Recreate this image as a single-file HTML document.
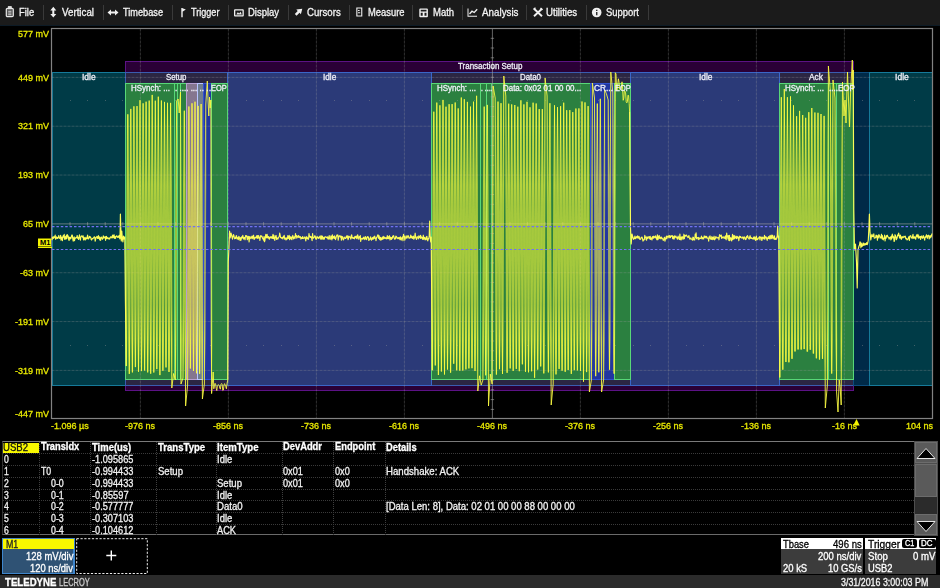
<!DOCTYPE html>
<html><head><meta charset="utf-8"><title>USB2 decode</title>
<style>
html,body{margin:0;padding:0;background:#000;}
body{width:940px;height:588px;position:relative;overflow:hidden;font-family:"Liberation Sans",sans-serif;font-size:11px;color:#fff;}
.abs{position:absolute;white-space:nowrap;}
.t{position:absolute;white-space:nowrap;transform-origin:0 50%;-webkit-text-stroke:0.3px currentColor;}
#menu{position:absolute;left:0;top:0;width:940px;height:25px;background:#1b1b1b;border-bottom:1px solid #0d1b26;}
.sep{position:absolute;top:5px;width:1px;height:15px;background:#3a3a3a;}
#tbl{position:absolute;left:2px;top:441px;width:912px;height:94px;border-top:1px solid #7a7a7a;border-bottom:1px solid #6a6a6a;border-left:1px solid #333;box-sizing:border-box;}
.tr{position:absolute;left:0;width:911px;height:0;border-bottom:1px dotted #3a3a3a;}
.vc{position:absolute;top:0;width:0;height:93px;border-left:1px dotted #3e3e3e;}
</style></head><body>

<div id="menu">
<div class="sep" style="left:43.0px"></div>
<div class="sep" style="left:103.0px"></div>
<div class="sep" style="left:172.0px"></div>
<div class="sep" style="left:228.0px"></div>
<div class="sep" style="left:287.8px"></div>
<div class="sep" style="left:349.0px"></div>
<div class="sep" style="left:412.0px"></div>
<div class="sep" style="left:462.0px"></div>
<div class="sep" style="left:526.3px"></div>
<div class="sep" style="left:586.2px"></div>
<div class="sep" style="left:648.0px"></div>
<svg class="abs" style="left:0;top:0" width="660" height="26" viewBox="0 0 660 26">
<g fill="none" stroke="#e8e8e8" stroke-width="1.2">
<rect x="6.3" y="8.3" width="7" height="8.4" rx="1.2" fill="#555"/><rect x="8.3" y="6.6" width="3" height="2.2" fill="#ddd" stroke-width="0.8"/>
<path d="M8.2 11.3h3.200M8.200 13h3.200M8.200 14.700h3.200" stroke-width="0.8"/>
</g>
<g fill="#f0f0f0">
<path d="M53.300 6.800l3 3.600h-2v3.600h2l-3 3.600l-3-3.600h2v-3.600h-2z"/>
<path d="M107.500 12.500l3.500-3v2h4v-2l3.500 3l-3.500 3v-2h-4v2z"/>
<path d="M181.300 8h1.400v9.300h-1.400zM182.500 8.200l3.300 1.400l-3.300 2.200z"/>
<path d="M235 9.300h7.800a1 1 0 0 1 1 1v5.200a1 1 0 0 1 -1 1h-7.800a1 1 0 0 1 -1 -1v-5.200a1 1 0 0 1 1 -1zM235.300 10.600v4.600h7.200v-4.600z" fill-rule="evenodd"/>
<path d="M236.300 14.600l1.500-2.300l1.400 1.300l1.400-1.800l1.200 2.800z"/>
<path d="M302.300 8.800l-1.400 5.400l-1.400-1.400l-2.900 3l-1.800-1.800l2.900-3l-1.400-1.400z"/>
<path d="M356.300 7.500h6v9h-6zM357.400 8.600v6.800h3.800v-6.800z" fill-rule="evenodd"/><path d="M358 10h1.600v1h-1.600zM358 12.300h2.200v1h-2.200z"/>
<path d="M420.300 8.600h6.600a1 1 0 0 1 1 1v6.600a1 1 0 0 1 -1 1h-6.600a1 1 0 0 1 -1 -1v-6.600a1 1 0 0 1 1 -1zM420.700 12.800v3h2v-3zM424.500 12.800v3h2v-3zM420.700 9.800v1.600h5.800v-1.600z" fill-rule="evenodd"/>
<path d="M467.500 8.500h1v7.300h8.500v1h-9.500z"/><path d="M469.500 14l2.500-2.800l2.200 1.300l3-3.200" fill="none" stroke="#f0f0f0" stroke-width="1.300"/>
<circle cx="596.700" cy="12.500" r="4.800"/>
</g>
<path d="M534 8.700l8 7.600M542 8.700l-8 7.600" fill="none" stroke="#f0f0f0" stroke-width="1.900"/>
<path d="M533.500 9.300l2-1.500M540.500 8l2 1.800" fill="none" stroke="#f0f0f0" stroke-width="1.400"/>
<path d="M596.100 9.800h1.300v1.300h-1.300zM596.100 12h1.300v3.200h-1.300z" fill="#1b1b1b"/>
</svg>
<div class="t" style="left:19.1px;top:6.3px;font-size:10.5px;line-height:12.5px;color:#f4f4f4;transform:scaleX(0.892);">File</div>
<div class="t" style="left:62.2px;top:6.3px;font-size:10.5px;line-height:12.5px;color:#f4f4f4;transform:scaleX(0.929);">Vertical</div>
<div class="t" style="left:122.5px;top:6.3px;font-size:10.5px;line-height:12.5px;color:#f4f4f4;transform:scaleX(0.875);">Timebase</div>
<div class="t" style="left:191.1px;top:6.3px;font-size:10.5px;line-height:12.5px;color:#f4f4f4;transform:scaleX(0.864);">Trigger</div>
<div class="t" style="left:247.6px;top:6.3px;font-size:10.5px;line-height:12.5px;color:#f4f4f4;transform:scaleX(0.903);">Display</div>
<div class="t" style="left:306.8px;top:6.3px;font-size:10.5px;line-height:12.5px;color:#f4f4f4;transform:scaleX(0.917);">Cursors</div>
<div class="t" style="left:367.9px;top:6.3px;font-size:10.5px;line-height:12.5px;color:#f4f4f4;transform:scaleX(0.893);">Measure</div>
<div class="t" style="left:432.5px;top:6.3px;font-size:10.5px;line-height:12.5px;color:#f4f4f4;transform:scaleX(0.904);">Math</div>
<div class="t" style="left:481.7px;top:6.3px;font-size:10.5px;line-height:12.5px;color:#f4f4f4;transform:scaleX(0.934);">Analysis</div>
<div class="t" style="left:546.3px;top:6.3px;font-size:10.5px;line-height:12.5px;color:#f4f4f4;transform:scaleX(0.922);">Utilities</div>
<div class="t" style="left:606.0px;top:6.3px;font-size:10.5px;line-height:12.5px;color:#f4f4f4;transform:scaleX(0.897);">Support</div>
</div>
<div class="t" style="left:17.5px;top:28.8px;font-size:9.2px;line-height:11.2px;color:#e8e800;transform:scaleX(0.980);">577 mV</div>
<div class="t" style="left:17.5px;top:72.9px;font-size:9.2px;line-height:11.2px;color:#e8e800;transform:scaleX(0.980);">449 mV</div>
<div class="t" style="left:17.5px;top:121.4px;font-size:9.2px;line-height:11.2px;color:#e8e800;transform:scaleX(0.980);">321 mV</div>
<div class="t" style="left:17.5px;top:170.4px;font-size:9.2px;line-height:11.2px;color:#e8e800;transform:scaleX(0.980);">193 mV</div>
<div class="t" style="left:22.5px;top:219.4px;font-size:9.2px;line-height:11.2px;color:#e8e800;transform:scaleX(0.980);">65 mV</div>
<div class="t" style="left:19.5px;top:267.9px;font-size:9.2px;line-height:11.2px;color:#e8e800;transform:scaleX(0.980);">-63 mV</div>
<div class="t" style="left:14.5px;top:316.7px;font-size:9.2px;line-height:11.2px;color:#e8e800;transform:scaleX(0.980);">-191 mV</div>
<div class="t" style="left:14.5px;top:365.7px;font-size:9.2px;line-height:11.2px;color:#e8e800;transform:scaleX(0.980);">-319 mV</div>
<div class="t" style="left:14.5px;top:408.7px;font-size:9.2px;line-height:11.2px;color:#e8e800;transform:scaleX(0.980);">-447 mV</div>
<div class="t" style="left:51.2px;top:421.2px;font-size:9.2px;line-height:11.2px;color:#e8e800;transform:scaleX(0.980);">-1.096 µs</div>
<div class="t" style="left:125.0px;top:421.2px;font-size:9.2px;line-height:11.2px;color:#e8e800;transform:scaleX(0.980);">-976 ns</div>
<div class="t" style="left:213.0px;top:421.2px;font-size:9.2px;line-height:11.2px;color:#e8e800;transform:scaleX(0.980);">-856 ns</div>
<div class="t" style="left:301.0px;top:421.2px;font-size:9.2px;line-height:11.2px;color:#e8e800;transform:scaleX(0.980);">-736 ns</div>
<div class="t" style="left:389.0px;top:421.2px;font-size:9.2px;line-height:11.2px;color:#e8e800;transform:scaleX(0.980);">-616 ns</div>
<div class="t" style="left:477.0px;top:421.2px;font-size:9.2px;line-height:11.2px;color:#e8e800;transform:scaleX(0.980);">-496 ns</div>
<div class="t" style="left:565.0px;top:421.2px;font-size:9.2px;line-height:11.2px;color:#e8e800;transform:scaleX(0.980);">-376 ns</div>
<div class="t" style="left:653.0px;top:421.2px;font-size:9.2px;line-height:11.2px;color:#e8e800;transform:scaleX(0.980);">-256 ns</div>
<div class="t" style="left:741.0px;top:421.2px;font-size:9.2px;line-height:11.2px;color:#e8e800;transform:scaleX(0.980);">-136 ns</div>
<div class="t" style="left:831.5px;top:421.2px;font-size:9.2px;line-height:11.2px;color:#e8e800;transform:scaleX(0.980);">-16 ns</div>
<div class="t" style="left:905.9px;top:421.2px;font-size:9.2px;line-height:11.2px;color:#e8e800;transform:scaleX(0.980);">104 ns</div>
<svg class="abs" style="left:0;top:0" width="940" height="588" viewBox="0 0 940 588">
<g shape-rendering="crispEdges">
<rect x="125.5" y="61.0" width="727.8" height="329.5" fill="#2a0036" stroke="#5c1285" stroke-width="1"/><rect x="52.0" y="72.5" width="73.5" height="313.0" fill="#003b47" stroke="#167a9a" stroke-width="1"/><rect x="125.5" y="72.5" width="102.3" height="313.0" fill="#2b2643" stroke="#3a5cb0" stroke-width="1"/><rect x="431.5" y="72.5" width="198.5" height="313.0" fill="#2b2643" stroke="#3a5cb0" stroke-width="1"/><rect x="779.0" y="72.5" width="74.2" height="313.0" fill="#2b2643" stroke="#3a5cb0" stroke-width="1"/><rect x="227.8" y="72.5" width="203.7" height="313.0" fill="#2b3a78" stroke="#3a66c8" stroke-width="1"/><rect x="630.0" y="72.5" width="149.0" height="313.0" fill="#2b3a78" stroke="#3a66c8" stroke-width="1"/><rect x="853.2" y="72.5" width="16.3" height="313.0" fill="#002a48" stroke="#0d4c7c" stroke-width="1"/><rect x="869.5" y="72.5" width="62.5" height="313.0" fill="#003b47" stroke="#167a9a" stroke-width="1"/><rect x="125.5" y="83.0" width="48.8" height="296.5" fill="#2b8040" stroke="#58d878" stroke-width="1"/><rect x="174.3" y="83.0" width="3.1" height="296.5" fill="#2b8040" stroke="#58d878" stroke-width="1"/><rect x="177.4" y="83.0" width="3.2" height="296.5" fill="#2b8040" stroke="#58d878" stroke-width="1"/><rect x="180.6" y="83.0" width="5.9" height="296.5" fill="#2b8040" stroke="#58d878" stroke-width="1"/><rect x="186.5" y="83.0" width="10.5" height="296.5" fill="#85768f" stroke="#b79fd0" stroke-width="1"/><rect x="197.0" y="83.0" width="6.0" height="296.5" fill="#6f7d90" stroke="#b8c4ff" stroke-width="1"/><rect x="203.0" y="83.0" width="8.3" height="296.5" fill="#2236a0" stroke="#3050d0" stroke-width="1"/><rect x="211.3" y="83.0" width="16.5" height="296.5" fill="#2b8040" stroke="#58d878" stroke-width="1"/><rect x="431.5" y="83.0" width="48.5" height="296.5" fill="#2b8040" stroke="#58d878" stroke-width="1"/><rect x="480.0" y="83.0" width="6.0" height="296.5" fill="#2b8040" stroke="#58d878" stroke-width="1"/><rect x="486.0" y="83.0" width="5.5" height="296.5" fill="#2b8040" stroke="#58d878" stroke-width="1"/><rect x="491.5" y="83.0" width="99.1" height="296.5" fill="#2b8040" stroke="#58d878" stroke-width="1"/><rect x="590.6" y="83.0" width="23.6" height="296.5" fill="#2236a0" stroke="#3050d0" stroke-width="1"/><rect x="614.2" y="83.0" width="15.8" height="296.5" fill="#2b8040" stroke="#58d878" stroke-width="1"/><rect x="779.0" y="83.0" width="49.0" height="296.5" fill="#2b8040" stroke="#58d878" stroke-width="1"/><rect x="828.0" y="83.0" width="8.0" height="296.5" fill="#2b8040" stroke="#58d878" stroke-width="1"/><rect x="836.0" y="83.0" width="17.2" height="296.5" fill="#2b8040" stroke="#58d878" stroke-width="1"/>
</g>
<g stroke="#9a9a9a" stroke-opacity="0.3" stroke-width="1" stroke-dasharray="3 1"><line x1="51.5" y1="77.40" x2="932.5" y2="77.40"/><line x1="51.5" y1="126.23" x2="932.5" y2="126.23"/><line x1="51.5" y1="175.06" x2="932.5" y2="175.06"/><line x1="51.5" y1="272.72" x2="932.5" y2="272.72"/><line x1="51.5" y1="321.55" x2="932.5" y2="321.55"/><line x1="51.5" y1="370.38" x2="932.5" y2="370.38"/><line x1="140.4" y1="28.5" x2="140.4" y2="418.5"/><line x1="228.4" y1="28.5" x2="228.4" y2="418.5"/><line x1="316.4" y1="28.5" x2="316.4" y2="418.5"/><line x1="404.4" y1="28.5" x2="404.4" y2="418.5"/><line x1="580.4" y1="28.5" x2="580.4" y2="418.5"/><line x1="668.4" y1="28.5" x2="668.4" y2="418.5"/><line x1="756.4" y1="28.5" x2="756.4" y2="418.5"/><line x1="844.4" y1="28.5" x2="844.4" y2="418.5"/></g>
<g stroke="#a0a0a0" stroke-opacity="0.62" stroke-width="1"><line x1="51.5" y1="223.89" x2="932.5" y2="223.89"/><line x1="492.4" y1="28.5" x2="492.4" y2="418.5"/><line x1="70.0" y1="222.200" x2="70.0" y2="225.600"/><line x1="87.6" y1="222.200" x2="87.6" y2="225.600"/><line x1="105.2" y1="222.200" x2="105.2" y2="225.600"/><line x1="122.8" y1="222.200" x2="122.8" y2="225.600"/><line x1="140.4" y1="222.200" x2="140.4" y2="225.600"/><line x1="158.0" y1="222.200" x2="158.0" y2="225.600"/><line x1="175.6" y1="222.200" x2="175.6" y2="225.600"/><line x1="193.2" y1="222.200" x2="193.2" y2="225.600"/><line x1="210.8" y1="222.200" x2="210.8" y2="225.600"/><line x1="228.4" y1="222.200" x2="228.4" y2="225.600"/><line x1="246.0" y1="222.200" x2="246.0" y2="225.600"/><line x1="263.6" y1="222.200" x2="263.6" y2="225.600"/><line x1="281.2" y1="222.200" x2="281.2" y2="225.600"/><line x1="298.8" y1="222.200" x2="298.8" y2="225.600"/><line x1="316.4" y1="222.200" x2="316.4" y2="225.600"/><line x1="334.0" y1="222.200" x2="334.0" y2="225.600"/><line x1="351.6" y1="222.200" x2="351.6" y2="225.600"/><line x1="369.2" y1="222.200" x2="369.2" y2="225.600"/><line x1="386.8" y1="222.200" x2="386.8" y2="225.600"/><line x1="404.4" y1="222.200" x2="404.4" y2="225.600"/><line x1="422.0" y1="222.200" x2="422.0" y2="225.600"/><line x1="439.6" y1="222.200" x2="439.6" y2="225.600"/><line x1="457.2" y1="222.200" x2="457.2" y2="225.600"/><line x1="474.8" y1="222.200" x2="474.8" y2="225.600"/><line x1="492.4" y1="222.200" x2="492.4" y2="225.600"/><line x1="510.0" y1="222.200" x2="510.0" y2="225.600"/><line x1="527.6" y1="222.200" x2="527.6" y2="225.600"/><line x1="545.2" y1="222.200" x2="545.2" y2="225.600"/><line x1="562.8" y1="222.200" x2="562.8" y2="225.600"/><line x1="580.4" y1="222.200" x2="580.4" y2="225.600"/><line x1="598.0" y1="222.200" x2="598.0" y2="225.600"/><line x1="615.6" y1="222.200" x2="615.6" y2="225.600"/><line x1="633.2" y1="222.200" x2="633.2" y2="225.600"/><line x1="650.8" y1="222.200" x2="650.8" y2="225.600"/><line x1="668.4" y1="222.200" x2="668.4" y2="225.600"/><line x1="686.0" y1="222.200" x2="686.0" y2="225.600"/><line x1="703.6" y1="222.200" x2="703.6" y2="225.600"/><line x1="721.2" y1="222.200" x2="721.2" y2="225.600"/><line x1="738.8" y1="222.200" x2="738.8" y2="225.600"/><line x1="756.4" y1="222.200" x2="756.4" y2="225.600"/><line x1="774.0" y1="222.200" x2="774.0" y2="225.600"/><line x1="791.6" y1="222.200" x2="791.6" y2="225.600"/><line x1="809.2" y1="222.200" x2="809.2" y2="225.600"/><line x1="826.8" y1="222.200" x2="826.8" y2="225.600"/><line x1="844.4" y1="222.200" x2="844.4" y2="225.600"/><line x1="862.0" y1="222.200" x2="862.0" y2="225.600"/><line x1="879.6" y1="222.200" x2="879.6" y2="225.600"/><line x1="897.2" y1="222.200" x2="897.2" y2="225.600"/><line x1="914.8" y1="222.200" x2="914.8" y2="225.600"/><line x1="490.700" y1="38.3" x2="494.100" y2="38.3"/><line x1="490.700" y1="48.0" x2="494.100" y2="48.0"/><line x1="490.700" y1="57.8" x2="494.100" y2="57.8"/><line x1="490.700" y1="67.6" x2="494.100" y2="67.6"/><line x1="490.700" y1="77.3" x2="494.100" y2="77.3"/><line x1="490.700" y1="87.1" x2="494.100" y2="87.1"/><line x1="490.700" y1="96.9" x2="494.100" y2="96.9"/><line x1="490.700" y1="106.6" x2="494.100" y2="106.6"/><line x1="490.700" y1="116.4" x2="494.100" y2="116.4"/><line x1="490.700" y1="126.2" x2="494.100" y2="126.2"/><line x1="490.700" y1="135.9" x2="494.100" y2="135.9"/><line x1="490.700" y1="145.7" x2="494.100" y2="145.7"/><line x1="490.700" y1="155.5" x2="494.100" y2="155.5"/><line x1="490.700" y1="165.2" x2="494.100" y2="165.2"/><line x1="490.700" y1="175.0" x2="494.100" y2="175.0"/><line x1="490.700" y1="184.8" x2="494.100" y2="184.8"/><line x1="490.700" y1="194.5" x2="494.100" y2="194.5"/><line x1="490.700" y1="204.3" x2="494.100" y2="204.3"/><line x1="490.700" y1="214.1" x2="494.100" y2="214.1"/><line x1="490.700" y1="223.8" x2="494.100" y2="223.8"/><line x1="490.700" y1="233.6" x2="494.100" y2="233.6"/><line x1="490.700" y1="243.4" x2="494.100" y2="243.4"/><line x1="490.700" y1="253.1" x2="494.100" y2="253.1"/><line x1="490.700" y1="262.9" x2="494.100" y2="262.9"/><line x1="490.700" y1="272.6" x2="494.100" y2="272.6"/><line x1="490.700" y1="282.4" x2="494.100" y2="282.4"/><line x1="490.700" y1="292.2" x2="494.100" y2="292.2"/><line x1="490.700" y1="301.9" x2="494.100" y2="301.9"/><line x1="490.700" y1="311.7" x2="494.100" y2="311.7"/><line x1="490.700" y1="321.5" x2="494.100" y2="321.5"/><line x1="490.700" y1="331.2" x2="494.100" y2="331.2"/><line x1="490.700" y1="341.0" x2="494.100" y2="341.0"/><line x1="490.700" y1="350.8" x2="494.100" y2="350.8"/><line x1="490.700" y1="360.5" x2="494.100" y2="360.5"/><line x1="490.700" y1="370.3" x2="494.100" y2="370.3"/><line x1="490.700" y1="380.1" x2="494.100" y2="380.1"/><line x1="490.700" y1="389.8" x2="494.100" y2="389.8"/><line x1="490.700" y1="399.6" x2="494.100" y2="399.6"/><line x1="490.700" y1="409.4" x2="494.100" y2="409.4"/></g>
<g fill="#9a9a9a" fill-opacity="0.4" shape-rendering="crispEdges"><rect x="70.0" y="100.0" width="1" height="1"/><rect x="70.0" y="345.0" width="1" height="1"/><rect x="87.0" y="100.0" width="1" height="1"/><rect x="87.0" y="345.0" width="1" height="1"/><rect x="105.0" y="100.0" width="1" height="1"/><rect x="105.0" y="345.0" width="1" height="1"/><rect x="122.0" y="100.0" width="1" height="1"/><rect x="122.0" y="345.0" width="1" height="1"/><rect x="158.0" y="100.0" width="1" height="1"/><rect x="158.0" y="345.0" width="1" height="1"/><rect x="175.0" y="100.0" width="1" height="1"/><rect x="175.0" y="345.0" width="1" height="1"/><rect x="193.0" y="100.0" width="1" height="1"/><rect x="193.0" y="345.0" width="1" height="1"/><rect x="210.0" y="100.0" width="1" height="1"/><rect x="210.0" y="345.0" width="1" height="1"/><rect x="246.0" y="100.0" width="1" height="1"/><rect x="246.0" y="345.0" width="1" height="1"/><rect x="263.0" y="100.0" width="1" height="1"/><rect x="263.0" y="345.0" width="1" height="1"/><rect x="281.0" y="100.0" width="1" height="1"/><rect x="281.0" y="345.0" width="1" height="1"/><rect x="298.0" y="100.0" width="1" height="1"/><rect x="298.0" y="345.0" width="1" height="1"/><rect x="334.0" y="100.0" width="1" height="1"/><rect x="334.0" y="345.0" width="1" height="1"/><rect x="351.0" y="100.0" width="1" height="1"/><rect x="351.0" y="345.0" width="1" height="1"/><rect x="369.0" y="100.0" width="1" height="1"/><rect x="369.0" y="345.0" width="1" height="1"/><rect x="386.0" y="100.0" width="1" height="1"/><rect x="386.0" y="345.0" width="1" height="1"/><rect x="422.0" y="100.0" width="1" height="1"/><rect x="422.0" y="345.0" width="1" height="1"/><rect x="439.0" y="100.0" width="1" height="1"/><rect x="439.0" y="345.0" width="1" height="1"/><rect x="457.0" y="100.0" width="1" height="1"/><rect x="457.0" y="345.0" width="1" height="1"/><rect x="474.0" y="100.0" width="1" height="1"/><rect x="474.0" y="345.0" width="1" height="1"/><rect x="510.0" y="100.0" width="1" height="1"/><rect x="510.0" y="345.0" width="1" height="1"/><rect x="527.0" y="100.0" width="1" height="1"/><rect x="527.0" y="345.0" width="1" height="1"/><rect x="545.0" y="100.0" width="1" height="1"/><rect x="545.0" y="345.0" width="1" height="1"/><rect x="562.0" y="100.0" width="1" height="1"/><rect x="562.0" y="345.0" width="1" height="1"/><rect x="598.0" y="100.0" width="1" height="1"/><rect x="598.0" y="345.0" width="1" height="1"/><rect x="615.0" y="100.0" width="1" height="1"/><rect x="615.0" y="345.0" width="1" height="1"/><rect x="633.0" y="100.0" width="1" height="1"/><rect x="633.0" y="345.0" width="1" height="1"/><rect x="650.0" y="100.0" width="1" height="1"/><rect x="650.0" y="345.0" width="1" height="1"/><rect x="686.0" y="100.0" width="1" height="1"/><rect x="686.0" y="345.0" width="1" height="1"/><rect x="703.0" y="100.0" width="1" height="1"/><rect x="703.0" y="345.0" width="1" height="1"/><rect x="721.0" y="100.0" width="1" height="1"/><rect x="721.0" y="345.0" width="1" height="1"/><rect x="738.0" y="100.0" width="1" height="1"/><rect x="738.0" y="345.0" width="1" height="1"/><rect x="774.0" y="100.0" width="1" height="1"/><rect x="774.0" y="345.0" width="1" height="1"/><rect x="791.0" y="100.0" width="1" height="1"/><rect x="791.0" y="345.0" width="1" height="1"/><rect x="809.0" y="100.0" width="1" height="1"/><rect x="809.0" y="345.0" width="1" height="1"/><rect x="826.0" y="100.0" width="1" height="1"/><rect x="826.0" y="345.0" width="1" height="1"/><rect x="862.0" y="100.0" width="1" height="1"/><rect x="862.0" y="345.0" width="1" height="1"/><rect x="879.0" y="100.0" width="1" height="1"/><rect x="879.0" y="345.0" width="1" height="1"/><rect x="897.0" y="100.0" width="1" height="1"/><rect x="897.0" y="345.0" width="1" height="1"/><rect x="914.0" y="100.0" width="1" height="1"/><rect x="914.0" y="345.0" width="1" height="1"/></g>
<rect x="51.5" y="28.5" width="881.0" height="390.0" fill="none" stroke="#828282" stroke-width="1.2"/>
<path d="M52.0 240.2 L52.5 237.0 L52.9 237.7 L53.4 238.3 L53.8 236.5 L54.3 237.7 L54.7 237.7 L55.2 235.1 L55.6 239.2 L56.1 238.6 L56.5 236.8 L57.0 237.4 L57.4 238.5 L57.9 237.3 L58.3 237.3 L58.8 235.5 L59.2 238.5 L59.7 237.9 L60.1 238.1 L60.6 235.4 L61.0 240.2 L61.5 237.9 L61.9 237.1 L62.4 240.7 L62.8 237.6 L63.3 235.5 L63.7 237.1 L64.2 234.3 L64.6 239.3 L65.1 237.1 L65.5 236.6 L66.0 239.3 L66.4 235.2 L66.9 238.5 L67.3 234.6 L67.8 236.7 L68.2 235.9 L68.7 239.9 L69.1 240.3 L69.6 237.2 L70.0 239.0 L70.5 237.4 L70.9 238.6 L71.4 236.6 L71.8 235.1 L72.3 235.0 L72.7 238.3 L73.2 241.1 L73.6 238.1 L74.1 236.9 L74.5 240.6 L75.0 238.1 L75.4 237.9 L75.9 238.1 L76.3 237.5 L76.8 237.2 L77.2 235.5 L77.7 238.5 L78.1 237.6 L78.6 239.5 L79.0 237.1 L79.5 234.8 L79.9 237.6 L80.4 240.2 L80.8 237.1 L81.3 236.4 L81.7 235.9 L82.2 236.1 L82.6 237.2 L83.1 235.9 L83.5 239.9 L84.0 237.3 L84.4 237.9 L84.9 239.9 L85.3 240.0 L85.8 237.4 L86.2 238.2 L86.7 238.8 L87.1 237.4 L87.6 235.0 L88.0 238.7 L88.5 239.0 L88.9 238.3 L89.4 236.3 L89.8 237.4 L90.3 236.8 L90.7 237.3 L91.2 239.6 L91.6 240.0 L92.1 238.7 L92.5 238.5 L93.0 238.7 L93.4 237.7 L93.9 237.6 L94.3 236.7 L94.8 237.6 L95.2 241.1 L95.7 239.0 L96.1 237.2 L96.6 237.0 L97.0 236.4 L97.5 238.3 L97.9 238.3 L98.4 235.5 L98.8 238.4 L99.3 236.8 L99.7 239.8 L100.2 237.9 L100.6 240.3 L101.1 237.0 L101.5 237.3 L102.0 238.1 L102.4 239.3 L102.9 238.5 L103.3 235.8 L103.8 238.0 L104.2 237.7 L104.7 237.1 L105.1 236.7 L105.6 240.3 L106.0 237.1 L106.5 236.4 L106.9 238.7 L107.4 237.9 L107.8 237.6 L108.3 238.9 L108.7 238.4 L109.2 238.2 L109.6 239.1 L110.1 238.1 L110.5 236.8 L111.0 237.2 L111.4 236.9 L111.9 238.0 L112.3 236.1 L112.8 235.0 L113.2 237.8 L113.7 235.7 L114.1 234.8 L114.6 238.3 L115.0 236.6 L115.5 238.4 L115.9 236.9 L116.4 236.0 L116.8 235.8 L117.3 236.9 L117.7 237.3 L118.2 236.5 L118.6 237.3 L119.1 235.4 L119.5 237.7 L120.0 239.0 L120.4 214.0 L120.8 228.0 L121.3 241.0 L121.8 231.0 L122.3 238.0 L122.9 242.0 L123.5 236.0 L124.2 239.0 L124.8 237.0 L125.4 300.0 L126.3 366.1 M227.8 380.0 L228.3 262.0 L229.0 246.0 L229.6 231.0 L230.2 238.0 L231.0 233.0 L232.0 237.0 L232.5 239.1 L232.9 236.8 L233.4 234.5 L233.8 235.0 L234.3 237.4 L234.7 238.8 L235.2 237.6 L235.6 238.4 L236.1 236.0 L236.5 235.7 L237.0 239.0 L237.4 238.4 L237.9 237.7 L238.3 239.6 L238.8 236.3 L239.2 237.1 L239.7 239.2 L240.1 240.5 L240.6 237.7 L241.0 240.2 L241.5 236.8 L241.9 238.2 L242.4 237.4 L242.8 235.3 L243.3 238.1 L243.7 239.1 L244.2 237.5 L244.6 237.6 L245.1 239.8 L245.5 235.8 L246.0 235.5 L246.4 236.7 L246.9 235.9 L247.3 239.7 L247.8 238.2 L248.2 236.4 L248.7 236.8 L249.1 242.0 L249.6 236.8 L250.0 236.6 L250.5 238.2 L250.9 238.7 L251.4 238.0 L251.8 236.3 L252.3 236.0 L252.7 238.6 L253.2 237.6 L253.6 235.2 L254.1 239.5 L254.5 238.9 L255.0 237.3 L255.4 237.3 L255.9 238.0 L256.3 236.7 L256.8 235.7 L257.2 238.2 L257.7 235.5 L258.1 238.3 L258.6 235.5 L259.0 237.6 L259.5 237.5 L259.9 240.4 L260.4 236.1 L260.8 235.6 L261.3 236.7 L261.7 236.0 L262.2 236.8 L262.6 238.3 L263.1 238.9 L263.5 240.2 L264.0 236.6 L264.4 241.7 L264.9 240.7 L265.3 237.4 L265.8 234.3 L266.2 237.6 L266.7 237.8 L267.1 234.3 L267.6 237.8 L268.0 237.4 L268.5 236.5 L268.9 238.6 L269.4 239.2 L269.8 237.0 L270.3 238.0 L270.7 236.7 L271.2 236.5 L271.6 237.8 L272.1 238.5 L272.5 236.9 L273.0 234.4 L273.4 238.6 L273.9 235.3 L274.3 237.9 L274.8 240.4 L275.2 237.7 L275.7 235.9 L276.1 235.5 L276.6 239.5 L277.0 237.7 L277.5 238.5 L277.9 239.1 L278.4 237.6 L278.8 237.2 L279.3 236.3 L279.7 233.1 L280.2 235.4 L280.6 237.6 L281.1 237.4 L281.5 238.3 L282.0 237.5 L282.4 237.9 L282.9 238.9 L283.3 236.4 L283.8 237.3 L284.2 235.3 L284.7 239.2 L285.1 237.8 L285.6 238.4 L286.0 240.0 L286.5 239.3 L286.9 237.6 L287.4 238.9 L287.8 235.6 L288.3 238.4 L288.7 237.9 L289.2 235.3 L289.6 239.7 L290.1 236.6 L290.5 238.7 L291.0 237.1 L291.4 239.2 L291.9 239.7 L292.3 236.5 L292.8 235.4 L293.2 237.5 L293.7 239.0 L294.1 237.1 L294.6 236.8 L295.0 238.4 L295.5 233.6 L295.9 236.7 L296.4 235.6 L296.8 238.1 L297.3 236.6 L297.7 236.0 L298.2 237.2 L298.6 235.5 L299.1 237.7 L299.5 236.7 L300.0 237.1 L300.4 236.6 L300.9 239.1 L301.3 237.5 L301.8 238.5 L302.2 238.4 L302.7 236.5 L303.1 238.6 L303.6 238.2 L304.0 238.2 L304.5 237.1 L304.9 237.1 L305.4 238.9 L305.8 241.0 L306.3 236.5 L306.7 238.5 L307.2 237.2 L307.6 238.9 L308.1 238.4 L308.5 239.3 L309.0 233.5 L309.4 236.8 L309.9 236.2 L310.3 237.5 L310.8 236.6 L311.2 236.7 L311.7 238.7 L312.1 240.6 L312.6 233.5 L313.0 237.2 L313.5 238.2 L313.9 237.7 L314.4 237.2 L314.8 235.7 L315.3 236.3 L315.7 238.8 L316.2 239.3 L316.6 237.8 L317.1 236.4 L317.5 237.8 L318.0 237.3 L318.4 238.5 L318.9 237.9 L319.3 236.8 L319.8 238.0 L320.2 235.9 L320.7 238.9 L321.1 239.5 L321.6 235.9 L322.0 238.3 L322.5 236.2 L322.9 239.3 L323.4 239.1 L323.8 237.4 L324.3 239.2 L324.7 237.1 L325.2 236.7 L325.6 236.8 L326.1 237.5 L326.5 237.2 L327.0 237.9 L327.4 236.8 L327.9 238.8 L328.3 239.2 L328.8 237.0 L329.2 235.6 L329.7 238.8 L330.1 239.4 L330.6 237.5 L331.0 235.8 L331.5 238.1 L331.9 240.0 L332.4 234.9 L332.8 238.4 L333.3 237.2 L333.7 236.4 L334.2 238.4 L334.6 235.8 L335.1 238.1 L335.5 239.7 L336.0 238.0 L336.4 236.4 L336.9 235.0 L337.3 235.8 L337.8 234.9 L338.2 240.1 L338.7 237.3 L339.1 236.1 L339.6 235.8 L340.0 236.1 L340.5 237.2 L340.9 235.8 L341.4 240.2 L341.8 236.6 L342.3 236.5 L342.7 238.2 L343.2 239.9 L343.6 239.7 L344.1 237.0 L344.5 238.1 L345.0 237.9 L345.4 238.5 L345.9 238.1 L346.3 236.3 L346.8 235.8 L347.2 238.0 L347.7 235.9 L348.1 239.7 L348.6 237.8 L349.0 236.2 L349.5 237.2 L349.9 236.9 L350.4 237.5 L350.8 239.1 L351.3 235.5 L351.7 234.9 L352.2 238.2 L352.6 237.4 L353.1 237.9 L353.5 238.4 L354.0 237.4 L354.4 238.9 L354.9 236.4 L355.3 237.8 L355.8 236.5 L356.2 236.0 L356.7 238.6 L357.1 238.6 L357.6 234.8 L358.0 236.0 L358.5 238.1 L358.9 239.3 L359.4 236.7 L359.8 237.4 L360.3 235.6 L360.7 241.5 L361.2 238.4 L361.6 239.0 L362.1 238.7 L362.5 239.1 L363.0 238.6 L363.4 237.2 L363.9 238.8 L364.3 237.8 L364.8 239.6 L365.2 236.6 L365.7 236.9 L366.1 238.7 L366.6 239.6 L367.0 237.9 L367.5 236.6 L367.9 237.5 L368.4 237.0 L368.8 240.5 L369.3 239.0 L369.7 239.6 L370.2 238.2 L370.6 236.9 L371.1 239.5 L371.5 240.2 L372.0 238.6 L372.4 237.7 L372.9 239.3 L373.3 237.1 L373.8 238.8 L374.2 236.6 L374.7 236.2 L375.1 238.5 L375.6 238.2 L376.0 240.6 L376.5 237.3 L376.9 237.7 L377.4 236.0 L377.8 234.9 L378.3 235.0 L378.7 238.4 L379.2 235.9 L379.6 239.4 L380.1 239.8 L380.5 237.3 L381.0 240.2 L381.4 238.0 L381.9 239.4 L382.3 237.4 L382.8 239.1 L383.2 236.3 L383.7 238.6 L384.1 237.0 L384.6 237.5 L385.0 238.6 L385.5 238.0 L385.9 237.6 L386.4 238.8 L386.8 238.9 L387.3 235.6 L387.7 238.5 L388.2 238.7 L388.6 236.6 L389.1 238.3 L389.5 235.7 L390.0 239.9 L390.4 237.3 L390.9 237.6 L391.3 239.5 L391.8 237.5 L392.2 238.6 L392.7 236.1 L393.1 236.8 L393.6 235.6 L394.0 237.4 L394.5 239.2 L394.9 238.0 L395.4 239.0 L395.8 236.2 L396.3 236.4 L396.7 237.0 L397.2 238.6 L397.6 238.2 L398.1 237.7 L398.5 238.6 L399.0 237.5 L399.4 237.7 L399.9 239.7 L400.3 236.8 L400.8 238.0 L401.2 240.1 L401.7 237.9 L402.1 238.8 L402.6 236.8 L403.0 240.6 L403.5 234.3 L403.9 236.0 L404.4 236.1 L404.8 240.1 L405.3 238.2 L405.7 237.3 L406.2 235.8 L406.6 238.2 L407.1 237.9 L407.5 236.7 L408.0 235.5 L408.4 236.0 L408.9 238.0 L409.3 238.2 L409.8 237.8 L410.2 237.5 L410.7 235.0 L411.1 237.8 L411.6 236.2 L412.0 237.8 L412.5 238.4 L412.9 236.7 L413.4 236.2 L413.8 239.2 L414.3 238.2 L414.7 236.7 L415.2 233.2 L415.6 237.6 L416.1 238.6 L416.5 239.4 L417.0 236.7 L417.4 236.7 L417.9 237.0 L418.3 239.0 L418.8 235.9 L419.2 237.5 L419.7 236.3 L420.1 238.1 L420.6 235.4 L421.0 238.3 L421.5 237.0 L421.9 237.4 L422.4 238.5 L422.8 239.4 L423.3 235.2 L423.7 239.2 L424.2 238.5 L424.6 237.3 L425.1 239.8 L425.5 238.0 L426.0 239.6 L426.4 236.8 L426.9 236.4 L427.3 239.5 L427.8 240.9 L428.2 238.7 L428.7 239.0 L429.2 236.0 L429.7 221.0 L430.2 236.0 L430.7 242.0 L431.2 237.0 L432.3 370.3 M629.6 112.0 L630.0 170.0 L630.5 228.0 L631.2 244.0 L632.0 234.0 L633.0 238.0 L633.5 239.4 L634.0 238.0 L634.4 238.7 L634.9 236.0 L635.3 238.7 L635.8 238.7 L636.2 237.1 L636.7 236.5 L637.1 237.6 L637.6 235.9 L638.0 238.2 L638.5 238.1 L638.9 236.3 L639.4 237.8 L639.8 239.3 L640.3 239.3 L640.7 239.2 L641.2 237.5 L641.6 237.2 L642.1 237.1 L642.5 238.6 L643.0 241.2 L643.4 239.8 L643.9 240.1 L644.3 239.7 L644.8 235.3 L645.2 237.4 L645.7 237.1 L646.1 239.6 L646.6 240.2 L647.0 236.7 L647.5 237.8 L647.9 238.5 L648.4 237.0 L648.8 236.8 L649.3 236.7 L649.7 239.0 L650.2 236.3 L650.6 239.4 L651.1 237.8 L651.5 238.8 L652.0 240.0 L652.4 236.7 L652.9 236.5 L653.3 238.3 L653.8 236.2 L654.2 236.6 L654.7 237.5 L655.1 237.9 L655.6 235.8 L656.0 237.1 L656.5 238.6 L656.9 239.7 L657.4 234.8 L657.8 239.7 L658.3 239.0 L658.7 236.1 L659.2 235.5 L659.6 238.3 L660.1 237.1 L660.5 237.9 L661.0 239.0 L661.4 237.1 L661.9 237.9 L662.3 238.4 L662.8 239.0 L663.2 240.3 L663.7 240.2 L664.1 238.1 L664.6 237.3 L665.0 241.2 L665.5 238.7 L665.9 238.3 L666.4 236.1 L666.8 238.9 L667.3 236.5 L667.7 237.0 L668.2 235.7 L668.6 236.9 L669.1 237.8 L669.5 235.5 L670.0 236.4 L670.4 237.6 L670.9 235.8 L671.3 235.8 L671.8 236.5 L672.2 235.6 L672.7 238.6 L673.1 236.2 L673.6 238.8 L674.0 239.1 L674.5 235.9 L674.9 237.8 L675.4 237.0 L675.8 236.0 L676.3 237.2 L676.7 237.3 L677.2 238.8 L677.6 239.2 L678.1 236.1 L678.5 237.1 L679.0 238.5 L679.4 239.5 L679.9 234.0 L680.3 239.6 L680.8 237.4 L681.2 240.0 L681.7 237.1 L682.1 236.5 L682.6 237.8 L683.0 239.4 L683.5 237.7 L683.9 234.2 L684.4 238.7 L684.8 235.3 L685.3 236.2 L685.7 236.0 L686.2 234.9 L686.6 235.8 L687.1 236.2 L687.5 236.8 L688.0 237.6 L688.4 237.2 L688.9 235.5 L689.3 237.4 L689.8 239.2 L690.2 239.1 L690.7 237.9 L691.1 238.6 L691.6 239.0 L692.0 239.7 L692.5 240.2 L692.9 237.2 L693.4 237.3 L693.8 239.9 L694.3 240.0 L694.7 240.0 L695.2 234.2 L695.6 237.4 L696.1 232.8 L696.5 238.8 L697.0 237.8 L697.4 237.8 L697.9 237.5 L698.3 239.7 L698.8 237.3 L699.2 239.2 L699.7 238.5 L700.1 238.2 L700.6 238.4 L701.0 237.9 L701.5 236.1 L701.9 238.8 L702.4 238.8 L702.8 237.5 L703.3 238.8 L703.7 239.0 L704.2 235.8 L704.6 237.5 L705.1 237.0 L705.5 236.3 L706.0 238.2 L706.4 236.4 L706.9 237.0 L707.3 238.1 L707.8 238.2 L708.2 238.2 L708.7 241.1 L709.1 236.9 L709.6 238.1 L710.0 235.9 L710.5 238.4 L710.9 239.4 L711.4 239.5 L711.8 236.7 L712.3 237.3 L712.7 239.6 L713.2 237.6 L713.6 239.1 L714.1 236.2 L714.5 239.8 L715.0 239.2 L715.4 238.4 L715.9 236.5 L716.3 237.5 L716.8 237.9 L717.2 238.1 L717.7 237.5 L718.1 237.4 L718.6 238.0 L719.0 239.8 L719.5 234.7 L719.9 235.6 L720.4 235.4 L720.8 236.7 L721.3 235.1 L721.7 238.5 L722.2 237.8 L722.6 237.3 L723.1 236.7 L723.5 237.9 L724.0 238.0 L724.4 238.2 L724.9 236.6 L725.3 238.7 L725.8 235.5 L726.2 239.6 L726.7 233.1 L727.1 236.8 L727.6 235.9 L728.0 238.9 L728.5 235.5 L728.9 240.4 L729.4 235.4 L729.8 240.7 L730.3 238.4 L730.7 237.7 L731.2 238.4 L731.6 241.0 L732.1 239.0 L732.5 234.3 L733.0 239.5 L733.4 238.0 L733.9 235.3 L734.3 238.8 L734.8 235.9 L735.2 238.0 L735.7 238.0 L736.1 236.7 L736.6 238.7 L737.0 236.2 L737.5 238.0 L737.9 236.9 L738.4 237.4 L738.8 240.6 L739.3 237.9 L739.7 236.1 L740.2 237.5 L740.6 236.5 L741.1 237.7 L741.5 237.9 L742.0 237.8 L742.4 237.8 L742.9 236.9 L743.3 238.4 L743.8 239.3 L744.2 236.8 L744.7 237.6 L745.1 237.8 L745.6 239.6 L746.0 239.3 L746.5 236.6 L746.9 237.8 L747.4 235.5 L747.8 236.3 L748.3 237.7 L748.7 238.6 L749.2 239.1 L749.6 237.2 L750.1 235.7 L750.5 238.3 L751.0 237.4 L751.4 238.3 L751.9 237.9 L752.3 238.8 L752.8 238.7 L753.2 239.0 L753.7 237.0 L754.1 239.2 L754.6 236.9 L755.0 237.8 L755.5 240.5 L755.9 238.2 L756.4 236.0 L756.8 239.9 L757.3 239.2 L757.7 239.4 L758.2 238.0 L758.6 238.2 L759.1 237.4 L759.5 236.7 L760.0 240.0 L760.4 237.1 L760.9 237.0 L761.3 237.0 L761.8 240.5 L762.2 239.0 L762.7 237.1 L763.1 237.6 L763.6 238.5 L764.0 239.0 L764.5 235.3 L764.9 239.1 L765.4 237.4 L765.8 236.7 L766.3 237.1 L766.7 238.9 L767.2 240.3 L767.6 237.9 L768.1 238.5 L768.5 236.5 L769.0 238.4 L769.4 238.9 L769.9 235.5 L770.3 236.9 L770.8 238.9 L771.2 235.1 L771.7 237.1 L772.1 238.6 L772.6 235.2 L773.0 237.1 L773.5 237.8 L773.9 239.0 L774.4 235.8 L774.8 239.4 L775.3 238.2 L775.7 239.5 L776.2 239.4 L776.6 238.2 L777.2 236.0 L777.7 226.0 L778.2 238.0 L778.7 236.0 L779.8 377.4 M853.2 70.0 L853.8 210.0 L854.5 250.0 L855.5 244.0 L856.5 262.0 L857.2 288.0 L858.0 250.0 L859.0 246.0 L859.5 245.1 L860.0 241.8 L860.4 242.6 L860.9 247.6 L861.3 243.0 L861.8 246.5 L862.2 246.3 L862.7 244.4 L863.1 243.0 L863.6 245.4 L864.0 243.2 L864.5 244.6 L864.9 245.2 L865.4 243.6 L865.8 244.5 L866.3 244.4 L866.7 242.5 L867.2 244.6 L867.6 243.7 L868.3 240.0 L868.9 228.0 L869.4 214.0 L870.0 232.0 L870.8 240.0 L871.5 236.0 L872.0 234.3 L872.5 236.5 L872.9 236.6 L873.4 236.1 L873.8 233.9 L874.3 238.2 L874.7 238.0 L875.2 238.0 L875.6 237.5 L876.1 235.1 L876.5 237.2 L877.0 235.6 L877.4 240.3 L877.9 236.2 L878.3 238.0 L878.8 234.7 L879.2 235.2 L879.7 236.2 L880.1 238.1 L880.6 237.8 L881.0 237.4 L881.5 234.2 L881.9 238.7 L882.4 235.6 L882.8 239.4 L883.3 239.8 L883.7 238.2 L884.2 238.5 L884.6 235.1 L885.1 240.9 L885.5 237.3 L886.0 238.5 L886.4 235.7 L886.9 236.9 L887.3 235.2 L887.8 236.6 L888.2 237.0 L888.7 237.4 L889.1 239.1 L889.6 237.7 L890.0 237.4 L890.5 237.1 L890.9 240.0 L891.4 236.1 L891.8 238.8 L892.3 234.1 L892.7 235.7 L893.2 237.6 L893.6 236.8 L894.1 241.5 L894.5 240.9 L895.0 234.7 L895.4 235.4 L895.9 236.8 L896.3 239.6 L896.8 238.7 L897.2 237.5 L897.7 234.9 L898.1 235.7 L898.6 233.0 L899.0 234.7 L899.5 237.6 L899.9 238.2 L900.4 235.0 L900.8 237.2 L901.3 239.4 L901.7 237.3 L902.2 236.5 L902.6 237.9 L903.1 237.8 L903.5 237.1 L904.0 236.2 L904.4 236.4 L904.9 237.1 L905.3 236.2 L905.8 239.0 L906.2 238.3 L906.7 238.6 L907.1 240.0 L907.6 239.4 L908.0 239.1 L908.5 237.6 L908.9 236.7 L909.4 240.5 L909.8 236.0 L910.3 236.1 L910.7 235.7 L911.2 237.3 L911.6 237.6 L912.1 238.6 L912.5 236.7 L913.0 234.4 L913.4 237.5 L913.9 238.5 L914.3 237.1 L914.8 236.8 L915.2 237.8 L915.7 239.2 L916.1 236.9 L916.6 234.9 L917.0 236.2 L917.5 236.8 L917.9 234.3 L918.4 238.2 L918.8 235.9 L919.3 237.8 L919.7 237.3 L920.2 236.5 L920.6 239.4 L921.1 236.2 L921.5 236.0 L922.0 237.4 L922.4 238.3 L922.9 237.0 L923.3 235.5 L923.8 238.0 L924.2 237.9 L924.7 240.1 L925.1 236.7 L925.6 237.3 L926.0 236.2 L926.5 234.8 L926.9 237.1 L927.4 238.3 L927.8 235.5 L928.3 236.0 L928.7 235.2 L929.2 239.0 L929.6 236.1 L930.1 237.9 L930.5 235.7 L931.0 237.1 L931.4 236.1 L931.9 233.5" fill="none" stroke="#fcfc58" stroke-width="1.15" stroke-linejoin="round"/>
<defs><linearGradient id="ga" gradientUnits="userSpaceOnUse" x1="0" y1="50" x2="0" y2="420"><stop offset="0.000" stop-color="#000000"/><stop offset="0.168" stop-color="#000000"/><stop offset="0.365" stop-color="#ffffff"/><stop offset="0.784" stop-color="#ffffff"/><stop offset="0.876" stop-color="#0d0d0d"/><stop offset="1.000" stop-color="#000000"/></linearGradient><linearGradient id="gb" gradientUnits="userSpaceOnUse" x1="0" y1="50" x2="0" y2="420"><stop offset="0.000" stop-color="#ffffff"/><stop offset="0.203" stop-color="#ffffff"/><stop offset="0.419" stop-color="#292929"/><stop offset="0.689" stop-color="#292929"/><stop offset="0.816" stop-color="#ffffff"/><stop offset="1.000" stop-color="#ffffff"/></linearGradient><mask id="ma" maskUnits="userSpaceOnUse" x="120" y="50" width="740" height="370"><rect x="120" y="50" width="740" height="370" fill="url(#ga)"/></mask><mask id="mb" maskUnits="userSpaceOnUse" x="120" y="50" width="740" height="370"><rect x="120" y="50" width="740" height="370" fill="url(#gb)"/></mask>
<path id="wp" d="M126.3 366.1 L127.8 114.3 L129.3 373.9 L130.8 108.9 L132.4 372.4 L133.9 106.3 L135.4 367.1 L137.0 106.1 L138.5 371.8 L140.0 100.2 L141.5 371.1 L143.1 103.3 L144.6 370.5 L146.1 101.7 L147.7 372.4 L149.2 100.6 L150.7 373.7 L152.2 94.9 L153.8 372.5 L155.3 100.7 L156.8 369.1 L158.3 96.7 L159.9 375.1 L161.4 100.5 L162.9 370.8 L164.5 101.9 L166.0 367.4 L167.5 102.8 L169.0 372.0 L170.6 102.9 L171.8 388.0 L173.6 373.5 L175.4 380.0 L176.6 101.0 L178.2 99.0 L179.2 113.0 L180.5 92.0 L181.0 384.0 L183.0 378.0 L184.3 110.7 L185.6 406.0 L187.6 385.0 L188.9 106.5 L190.4 368.5 L192.0 103.3 L193.5 370.9 L195.0 101.7 L196.5 373.3 L198.1 105.9 L199.6 373.8 L201.1 104.0 L202.4 399.0 L204.4 384.0 L205.8 104.0 L207.3 81.0 L208.0 100.0 L208.8 116.0 L209.5 97.0 L210.2 108.0 L210.8 100.0 L211.6 393.6 L213.2 372.0 L213.8 388.8 L214.4 385.7 L215.0 383.3 L215.6 383.9 L216.2 388.3 L216.8 390.6 L217.4 385.4 L218.0 384.7 L218.6 384.8 L219.2 385.5 L219.8 388.2 L220.4 389.2 L221.0 384.2 L221.6 383.5 L222.2 384.5 L222.8 390.5 L223.4 390.0 L224.0 384.9 L224.6 383.6 L225.2 385.1 L225.8 386.7 L226.4 388.8 L227.0 383.5 L227.8 380.0 M432.3 370.3 L433.8 111.7 L435.3 365.4 L436.8 102.6 L438.4 375.0 L439.9 105.3 L441.4 371.5 L443.0 99.9 L444.5 374.5 L446.0 106.7 L447.5 369.5 L449.1 104.2 L450.6 372.7 L452.1 104.1 L453.7 363.7 L455.2 102.5 L456.7 370.3 L458.2 108.4 L459.8 370.7 L461.3 97.5 L462.8 370.6 L464.3 99.2 L465.9 369.4 L467.4 101.9 L468.9 368.4 L470.5 106.6 L472.0 368.2 L473.5 101.7 L475.0 371.0 L476.6 95.8 L477.8 391.0 L479.6 375.8 L481.2 385.1 L482.9 380.0 L484.2 106.6 L485.7 375.3 L487.3 104.9 L488.5 406.0 L490.3 374.1 L492.1 384.0 L493.1 86.0 L495.2 98.0 L496.4 374.6 L498.0 101.6 L499.5 369.2 L501.0 103.2 L502.5 374.0 L503.8 76.0 L505.8 96.0 L507.1 372.8 L508.7 103.7 L510.2 368.4 L511.7 104.4 L513.2 370.9 L514.8 105.0 L516.3 368.9 L517.8 106.7 L519.3 371.2 L520.9 100.3 L522.4 364.3 L523.9 104.4 L525.5 371.8 L527.0 101.8 L528.5 372.3 L530.0 107.3 L531.6 371.3 L533.1 102.7 L534.6 377.8 L536.2 103.5 L537.7 369.6 L539.2 109.1 L540.7 366.4 L542.3 109.1 L543.8 373.4 L545.1 78.0 L547.1 96.0 L548.4 372.4 L549.9 103.2 L551.2 405.0 L553.2 384.0 L554.5 105.3 L556.0 374.4 L557.5 107.1 L559.1 368.9 L560.6 106.2 L562.1 370.7 L563.7 102.7 L565.2 371.8 L566.7 110.2 L568.2 370.0 L569.8 110.1 L571.3 373.9 L572.8 112.1 L574.3 370.2 L575.9 108.5 L577.4 370.4 L578.9 108.4 L580.5 370.9 L582.0 101.5 L583.5 381.7 L585.0 102.4 L586.6 372.1 L588.1 106.1 L589.4 392.0 L591.4 380.0 L592.4 83.0 L594.5 98.0 L595.7 376.2 L597.3 103.6 L598.8 372.3 L600.3 98.8 L601.6 392.0 L603.6 380.0 L604.7 90.0 L606.4 93.6 L608.2 100.0 L609.5 369.7 L610.8 72.0 L612.8 92.0 L614.1 373.7 L615.3 72.7 L616.0 74.0 L616.6 90.0 L617.2 90.0 L617.8 83.7 L618.4 78.8 L619.0 82.1 L619.6 89.2 L620.2 89.3 L620.8 89.5 L621.4 88.0 L622.0 81.8 L622.6 88.8 L623.2 100.3 L623.8 98.1 L624.4 90.5 L625.0 91.4 L625.6 92.9 L626.2 101.8 L626.8 102.8 L627.4 101.8 L628.0 95.1 L628.6 95.6 L629.2 103.6 L629.6 112.0 M779.8 377.4 L781.3 97.2 L782.8 369.7 L784.3 89.0 L785.9 362.0 L787.4 97.2 L788.9 362.3 L790.5 96.4 L792.0 358.8 L793.5 105.3 L795.0 351.4 L796.6 116.2 L798.1 349.4 L799.6 110.9 L801.2 349.5 L802.7 115.0 L804.2 349.1 L805.7 117.8 L807.3 351.6 L808.8 112.2 L810.3 349.7 L811.8 108.0 L813.4 353.5 L814.9 112.5 L816.4 358.3 L818.0 112.8 L819.5 359.5 L821.0 114.0 L822.5 358.8 L824.1 115.9 L825.3 408.0 L827.4 385.0 L828.4 66.0 L830.4 92.0 L831.7 373.6 L833.0 80.0 L835.0 98.0 L836.6 392.0 L838.0 412.0 L839.2 380.0 L840.2 388.0 L841.2 405.0 L841.6 250.0 L842.5 82.0 L843.3 100.0 L844.0 116.0 L845.0 100.0 L846.0 123.0 L846.8 95.0 L847.5 72.0 L848.5 100.0 L849.5 127.0 L850.5 95.0 L851.5 75.0 L852.3 60.0 L852.9 90.0 L853.2 70.0"/></defs>
<g mask="url(#ma)"><use href="#wp" fill="none" stroke="#f4f83a" stroke-opacity="0.56" stroke-width="1.75" stroke-linejoin="bevel"/></g>
<g mask="url(#mb)"><use href="#wp" fill="none" stroke="#fbfb42" stroke-width="0.88" stroke-linejoin="miter" stroke-miterlimit="20"/></g>
<g stroke="#7272f4" stroke-width="1.2" stroke-dasharray="2.5 1.9"><line x1="52" y1="226.700" x2="932" y2="226.700"/><line x1="52" y1="249.500" x2="932" y2="249.500"/></g>
<path d="M856.500 419l3.200 6.500h-6.400z" fill="#f4f400"/>
<path d="M38 238.500h13v8h-13z" fill="#f4f400"/><path d="M38 247.500h14" stroke="#f4f400" stroke-width="1"/>
<text x="40" y="245.300" font-family="Liberation Sans, sans-serif" font-size="7.500" font-weight="bold" fill="#000">M1</text>
</svg>
<div class="t" style="left:82.4px;top:72.0px;font-size:8.6px;line-height:10.6px;color:#f0f0f8;transform:scaleX(0.988);">Idle</div>
<div class="t" style="left:166.3px;top:72.0px;font-size:8.6px;line-height:10.6px;color:#f0f0f8;transform:scaleX(0.912);">Setup</div>
<div class="t" style="left:323.2px;top:72.0px;font-size:8.6px;line-height:10.6px;color:#f0f0f8;transform:scaleX(0.959);">Idle</div>
<div class="t" style="left:520.2px;top:72.0px;font-size:8.6px;line-height:10.6px;color:#f0f0f8;transform:scaleX(0.915);">Data0</div>
<div class="t" style="left:698.5px;top:72.0px;font-size:8.6px;line-height:10.6px;color:#f0f0f8;transform:scaleX(0.974);">Idle</div>
<div class="t" style="left:809.0px;top:72.0px;font-size:8.6px;line-height:10.6px;color:#f0f0f8;transform:scaleX(0.977);">Ack</div>
<div class="t" style="left:894.6px;top:72.0px;font-size:8.6px;line-height:10.6px;color:#f0f0f8;transform:scaleX(0.995);">Idle</div>
<div class="t" style="left:457.6px;top:61.1px;font-size:8.6px;line-height:10.6px;color:#f0f0f8;transform:scaleX(0.927);">Transaction Setup</div>
<div class="t" style="left:130.9px;top:83.1px;font-size:8.6px;line-height:10.6px;color:#f0f0f8;transform:scaleX(0.925);">HSynch: ...</div>
<div class="t" style="left:174.5px;top:83.1px;font-size:8.6px;line-height:10.6px;color:#f0f0f8;transform:scaleX(0.935);">. .... ... .. .</div>
<div class="t" style="left:209.4px;top:83.1px;font-size:8.6px;line-height:10.6px;color:#f0f0f8;transform:scaleX(0.866);">.EOP</div>
<div class="t" style="left:436.5px;top:83.1px;font-size:8.6px;line-height:10.6px;color:#f0f0f8;transform:scaleX(0.925);">HSynch: ...</div>
<div class="t" style="left:481.0px;top:83.1px;font-size:8.6px;line-height:10.6px;color:#f0f0f8;transform:scaleX(0.767);">. ....</div>
<div class="t" style="left:502.6px;top:83.1px;font-size:8.6px;line-height:10.6px;color:#f0f0f8;transform:scaleX(0.924);">Data: 0x02 01 00 00...</div>
<div class="t" style="left:594.0px;top:83.1px;font-size:8.6px;line-height:10.6px;color:#f0f0f8;transform:scaleX(0.970);">CR...</div>
<div class="t" style="left:615.0px;top:83.1px;font-size:8.6px;line-height:10.6px;color:#f0f0f8;transform:scaleX(0.859);">EOP</div>
<div class="t" style="left:784.7px;top:83.1px;font-size:8.6px;line-height:10.6px;color:#f0f0f8;transform:scaleX(0.927);">HSynch: ...</div>
<div class="t" style="left:828.8px;top:83.1px;font-size:8.6px;line-height:10.6px;color:#f0f0f8;transform:scaleX(0.938);">....EOP</div>
<div id="tbl">
<div class="vc" style="left:36.3px"></div>
<div class="vc" style="left:87.3px"></div>
<div class="vc" style="left:153.1px"></div>
<div class="vc" style="left:212.8px"></div>
<div class="vc" style="left:278.7px"></div>
<div class="vc" style="left:330.3px"></div>
<div class="vc" style="left:381.8px"></div>
<div class="tr" style="top:11.42px"></div>
<div class="tr" style="top:23.14px"></div>
<div class="tr" style="top:34.86px"></div>
<div class="tr" style="top:46.58px"></div>
<div class="tr" style="top:58.30px"></div>
<div class="tr" style="top:70.02px"></div>
<div class="tr" style="top:81.74px"></div>
<div class="abs" style="left:0;top:0.800px;width:36.300px;height:10.200px;background:#f8f800"></div>
</div>
<div class="t" style="left:3.1px;top:442.4px;font-size:10.4px;line-height:12.4px;color:#111;transform:scaleX(0.920);">USB2</div>
<div class="t" style="left:40.8px;top:441.1px;font-size:10.4px;line-height:12.4px;color:#fff;transform:scaleX(0.895);font-weight:bold;">TransIdx</div>
<div class="t" style="left:92.2px;top:442.2px;font-size:10.4px;line-height:12.4px;color:#fff;transform:scaleX(0.911);font-weight:bold;">Time(us)</div>
<div class="t" style="left:158.3px;top:442.2px;font-size:10.4px;line-height:12.4px;color:#fff;transform:scaleX(0.921);font-weight:bold;">TransType</div>
<div class="t" style="left:216.6px;top:442.2px;font-size:10.4px;line-height:12.4px;color:#fff;transform:scaleX(0.927);font-weight:bold;">ItemType</div>
<div class="t" style="left:283.0px;top:441.1px;font-size:10.4px;line-height:12.4px;color:#fff;transform:scaleX(0.900);font-weight:bold;">DevAddr</div>
<div class="t" style="left:334.5px;top:441.1px;font-size:10.4px;line-height:12.4px;color:#fff;transform:scaleX(0.897);font-weight:bold;">Endpoint</div>
<div class="t" style="left:385.9px;top:442.2px;font-size:10.4px;line-height:12.4px;color:#fff;transform:scaleX(0.897);font-weight:bold;">Details</div>
<div class="t" style="left:3.6px;top:454.4px;font-size:10.2px;line-height:12.2px;color:#f2f2f2;transform:scaleX(0.846);">0</div>
<div class="t" style="left:92.2px;top:454.4px;font-size:10.2px;line-height:12.2px;color:#f2f2f2;transform:scaleX(0.901);">-1.095865</div>
<div class="t" style="left:216.6px;top:454.4px;font-size:10.2px;line-height:12.2px;color:#f2f2f2;transform:scaleX(0.930);">Idle</div>
<div class="t" style="left:3.6px;top:466.1px;font-size:10.2px;line-height:12.2px;color:#f2f2f2;transform:scaleX(0.846);">1</div>
<div class="t" style="left:40.8px;top:466.1px;font-size:10.2px;line-height:12.2px;color:#f2f2f2;transform:scaleX(0.857);">T0</div>
<div class="t" style="left:92.2px;top:466.1px;font-size:10.2px;line-height:12.2px;color:#f2f2f2;transform:scaleX(0.901);">-0.994433</div>
<div class="t" style="left:158.3px;top:466.1px;font-size:10.2px;line-height:12.2px;color:#f2f2f2;transform:scaleX(0.938);">Setup</div>
<div class="t" style="left:283.0px;top:466.1px;font-size:10.2px;line-height:12.2px;color:#f2f2f2;transform:scaleX(0.900);">0x01</div>
<div class="t" style="left:334.5px;top:466.1px;font-size:10.2px;line-height:12.2px;color:#f2f2f2;transform:scaleX(0.900);">0x0</div>
<div class="t" style="left:385.9px;top:466.1px;font-size:10.2px;line-height:12.2px;color:#f2f2f2;transform:scaleX(0.944);">Handshake: ACK</div>
<div class="t" style="left:3.6px;top:477.9px;font-size:10.2px;line-height:12.2px;color:#f2f2f2;transform:scaleX(0.846);">2</div>
<div class="t" style="left:51.0px;top:477.9px;font-size:10.2px;line-height:12.2px;color:#f2f2f2;transform:scaleX(0.868);">0-0</div>
<div class="t" style="left:92.2px;top:477.9px;font-size:10.2px;line-height:12.2px;color:#f2f2f2;transform:scaleX(0.901);">-0.994433</div>
<div class="t" style="left:216.6px;top:477.9px;font-size:10.2px;line-height:12.2px;color:#f2f2f2;transform:scaleX(0.938);">Setup</div>
<div class="t" style="left:283.0px;top:477.9px;font-size:10.2px;line-height:12.2px;color:#f2f2f2;transform:scaleX(0.900);">0x01</div>
<div class="t" style="left:334.5px;top:477.9px;font-size:10.2px;line-height:12.2px;color:#f2f2f2;transform:scaleX(0.900);">0x0</div>
<div class="t" style="left:3.6px;top:489.6px;font-size:10.2px;line-height:12.2px;color:#f2f2f2;transform:scaleX(0.846);">3</div>
<div class="t" style="left:51.0px;top:489.6px;font-size:10.2px;line-height:12.2px;color:#f2f2f2;transform:scaleX(0.868);">0-1</div>
<div class="t" style="left:92.2px;top:489.6px;font-size:10.2px;line-height:12.2px;color:#f2f2f2;transform:scaleX(0.909);">-0.85597</div>
<div class="t" style="left:216.6px;top:489.6px;font-size:10.2px;line-height:12.2px;color:#f2f2f2;transform:scaleX(0.930);">Idle</div>
<div class="t" style="left:3.6px;top:501.4px;font-size:10.2px;line-height:12.2px;color:#f2f2f2;transform:scaleX(0.846);">4</div>
<div class="t" style="left:51.0px;top:501.4px;font-size:10.2px;line-height:12.2px;color:#f2f2f2;transform:scaleX(0.868);">0-2</div>
<div class="t" style="left:92.2px;top:501.4px;font-size:10.2px;line-height:12.2px;color:#f2f2f2;transform:scaleX(0.901);">-0.577777</div>
<div class="t" style="left:216.6px;top:501.4px;font-size:10.2px;line-height:12.2px;color:#f2f2f2;transform:scaleX(0.944);">Data0</div>
<div class="t" style="left:385.9px;top:501.4px;font-size:10.2px;line-height:12.2px;color:#f2f2f2;transform:scaleX(0.936);">[Data Len: 8], Data: 02 01 00 00 88 00 00 00</div>
<div class="t" style="left:3.6px;top:513.1px;font-size:10.2px;line-height:12.2px;color:#f2f2f2;transform:scaleX(0.846);">5</div>
<div class="t" style="left:51.0px;top:513.1px;font-size:10.2px;line-height:12.2px;color:#f2f2f2;transform:scaleX(0.868);">0-3</div>
<div class="t" style="left:92.2px;top:513.1px;font-size:10.2px;line-height:12.2px;color:#f2f2f2;transform:scaleX(0.901);">-0.307103</div>
<div class="t" style="left:216.6px;top:513.1px;font-size:10.2px;line-height:12.2px;color:#f2f2f2;transform:scaleX(0.930);">Idle</div>
<div class="t" style="left:3.6px;top:524.9px;font-size:10.2px;line-height:12.2px;color:#f2f2f2;transform:scaleX(0.846);">6</div>
<div class="t" style="left:51.0px;top:524.9px;font-size:10.2px;line-height:12.2px;color:#f2f2f2;transform:scaleX(0.868);">0-4</div>
<div class="t" style="left:92.2px;top:524.9px;font-size:10.2px;line-height:12.2px;color:#f2f2f2;transform:scaleX(0.901);">-0.104612</div>
<div class="t" style="left:216.6px;top:524.9px;font-size:10.2px;line-height:12.2px;color:#f2f2f2;transform:scaleX(0.906);">ACK</div>
<div class="abs" style="left:0;top:535px;width:914px;height:3px;background:#000"></div>
<div class="abs" style="left:914px;top:441px;width:24px;height:95px;background:#4e4e4e"></div>
<div class="abs" style="left:915px;top:442px;width:22px;height:21px;background:#5a5a5a;box-sizing:border-box;border:1px solid #6c6c6c"></div>
<div class="abs" style="left:915px;top:464px;width:22px;height:33px;background:#5a5a5a;box-sizing:border-box;border:1px solid #6c6c6c"></div>
<div class="abs" style="left:915px;top:497px;width:22px;height:17px;background:#2b2b2b"></div>
<div class="abs" style="left:915px;top:514px;width:22px;height:21px;background:#5a5a5a;box-sizing:border-box;border:1px solid #6c6c6c"></div>
<svg class="abs" style="left:914px;top:441px" width="24" height="95" viewBox="0 0 24 95"><path d="M3 17.500L12 7.500L21 17.500z" fill="#000" stroke="#e6e6e6" stroke-width="1"/><path d="M3 80.500L12 90.500L21 80.500z" fill="#000" stroke="#e6e6e6" stroke-width="1"/></svg>
<div class="abs" style="left:2px;top:538px;width:72px;height:36px;background:#2f5274;box-sizing:border-box;border:1px solid #3f86cc"></div>
<div class="abs" style="left:2px;top:538px;width:72px;height:11.300px;background:#f8f800"></div>
<div class="abs" style="left:2px;top:537.500px;width:72.500px;height:36.500px;box-sizing:border-box;border:1.300px solid #3f86cc;border-top-color:#4a8ac0"></div>
<svg class="abs" style="left:76px;top:538px" width="72" height="36" viewBox="0 0 72 36"><rect x="0.700" y="0.700" width="70.600" height="34.800" fill="none" stroke="#ececec" stroke-width="1" stroke-dasharray="2.200 1.600"/><path d="M35.300 12.500v10M30.300 17.500h10" stroke="#fff" stroke-width="1.400" fill="none"/></svg>
<div class="abs" style="left:781px;top:538px;width:82px;height:36px;background:#3c3c3c"></div>
<div class="abs" style="left:781px;top:538px;width:82px;height:11px;background:#fff"></div>
<div class="abs" style="left:865.300px;top:538px;width:71.200px;height:36px;background:#3c3c3c"></div>
<div class="abs" style="left:865.300px;top:538px;width:71.200px;height:11px;background:#fff"></div>
<div class="abs" style="left:902px;top:539px;width:14.500px;height:9.300px;background:#000;border-radius:2px;overflow:hidden"></div>
<div class="abs" style="left:918.500px;top:539px;width:17px;height:9.300px;background:#000;border-radius:2px"></div>

<div class="t" style="left:5.6px;top:539.0px;font-size:10.4px;line-height:12.4px;color:#222;transform:scaleX(0.851);">M1</div>
<div class="t" style="left:25.5px;top:551.2px;font-size:10.4px;line-height:12.4px;color:#fff;transform:scaleX(0.913);">128 mV/div</div>
<div class="t" style="left:30.1px;top:562.8px;font-size:10.4px;line-height:12.4px;color:#fff;transform:scaleX(0.905);">120 ns/div</div>
<div class="t" style="left:783.0px;top:539.0px;font-size:10.4px;line-height:12.4px;color:#000;transform:scaleX(0.899);">Tbase</div>
<div class="t" style="left:832.7px;top:539.0px;font-size:10.4px;line-height:12.4px;color:#000;transform:scaleX(0.922);">496 ns</div>
<div class="t" style="left:818.1px;top:551.2px;font-size:10.4px;line-height:12.4px;color:#fff;transform:scaleX(0.915);">200 ns/div</div>
<div class="t" style="left:783.0px;top:562.8px;font-size:10.4px;line-height:12.4px;color:#fff;transform:scaleX(0.910);">20 kS</div>
<div class="t" style="left:827.6px;top:562.8px;font-size:10.4px;line-height:12.4px;color:#fff;transform:scaleX(0.902);">10 GS/s</div>
<div class="t" style="left:867.6px;top:539.0px;font-size:10.4px;line-height:12.4px;color:#000;transform:scaleX(0.986);">Trigger</div>
<div class="t" style="left:904.5px;top:538.4px;font-size:8.5px;line-height:10.5px;color:#fff;transform:scaleX(0.856);">C1</div>
<div class="t" style="left:921.3px;top:538.4px;font-size:8.5px;line-height:10.5px;color:#fff;transform:scaleX(0.937);">DC</div>
<div class="t" style="left:867.6px;top:551.2px;font-size:10.4px;line-height:12.4px;color:#fff;transform:scaleX(0.930);">Stop</div>
<div class="t" style="left:913.0px;top:551.2px;font-size:10.4px;line-height:12.4px;color:#fff;transform:scaleX(0.923);">0 mV</div>
<div class="t" style="left:867.6px;top:562.8px;font-size:10.4px;line-height:12.4px;color:#fff;transform:scaleX(0.898);">USB2</div>
<div class="abs" style="left:0;top:575px;width:940px;height:13px;background:#2b2b2b"></div>
<div class="t" style="left:4.8px;top:577.0px;font-size:10px;line-height:12px;color:#fff;transform:scaleX(0.964);font-weight:bold;">TELEDYNE</div>
<div class="t" style="left:59.2px;top:577.0px;font-size:10px;line-height:12px;color:#cccccc;transform:scaleX(0.747);">LECROY</div>
<div class="t" style="left:841.0px;top:576.8px;font-size:10px;line-height:12px;color:#f4f4f4;transform:scaleX(0.887);">3/31/2016 3:00:03 PM</div>
</body></html>
